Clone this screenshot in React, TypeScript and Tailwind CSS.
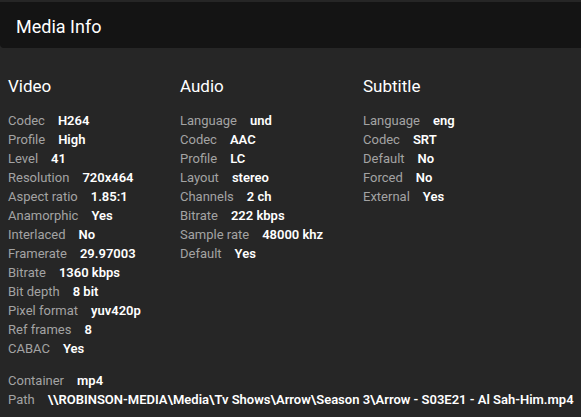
type Row = [string, string];

const video: Row[] = [
  ["Codec", "H264"],
  ["Profile", "High"],
  ["Level", "41"],
  ["Resolution", "720x464"],
  ["Aspect ratio", "1.85:1"],
  ["Anamorphic", "Yes"],
  ["Interlaced", "No"],
  ["Framerate", "29.97003"],
  ["Bitrate", "1360 kbps"],
  ["Bit depth", "8 bit"],
  ["Pixel format", "yuv420p"],
  ["Ref frames", "8"],
  ["CABAC", "Yes"],
];

const audio: Row[] = [
  ["Language", "und"],
  ["Codec", "AAC"],
  ["Profile", "LC"],
  ["Layout", "stereo"],
  ["Channels", "2 ch"],
  ["Bitrate", "222 kbps"],
  ["Sample rate", "48000 khz"],
  ["Default", "Yes"],
];

const subtitle: Row[] = [
  ["Language", "eng"],
  ["Codec", "SRT"],
  ["Default", "No"],
  ["Forced", "No"],
  ["External", "Yes"],
];

function InfoRow({ label, value }: { label: string; value: string }) {
  return (
    <div className="flex gap-[13px] whitespace-nowrap text-[13px] leading-[19px]">
      <span className="text-[#a3a3a3]">{label}</span>
      <span className="font-semibold text-white">{value}</span>
    </div>
  );
}

function Stream({ title, rows, width }: { title: string; rows: Row[]; width: string }) {
  return (
    <div className={width}>
      <h2 className="text-[17px] leading-[20px] text-white">{title}</h2>
      <div className="mt-[15px]">
        {rows.map(([l, v]) => (
          <InfoRow key={l} label={l} value={v} />
        ))}
      </div>
    </div>
  );
}

export default function App() {
  return (
    <div
      className="h-[417px] w-[581px] overflow-hidden bg-[#262626] pt-[2px]"
      style={{ fontFamily: "Roboto, 'Noto Sans', sans-serif" }}
    >
      <div className="h-[46px] rounded-bl-[4px] bg-[#141414] pl-4 pt-[13px]">
        <h1 className="text-[18px] leading-[24px] text-white">Media Info</h1>
      </div>

      <div className="px-2 pt-[28px]">
        <div className="flex">
          <Stream title="Video" rows={video} width="w-[172px]" />
          <Stream title="Audio" rows={audio} width="w-[183px]" />
          <Stream title="Subtitle" rows={subtitle} width="w-[200px]" />
        </div>

        <div className="mt-[13px]">
          <InfoRow label="Container" value="mp4" />
          <InfoRow
            label="Path"
            value="\\ROBINSON-MEDIA\Media\Tv Shows\Arrow\Season 3\Arrow - S03E21 - Al Sah-Him.mp4"
          />
        </div>
      </div>
    </div>
  );
}
